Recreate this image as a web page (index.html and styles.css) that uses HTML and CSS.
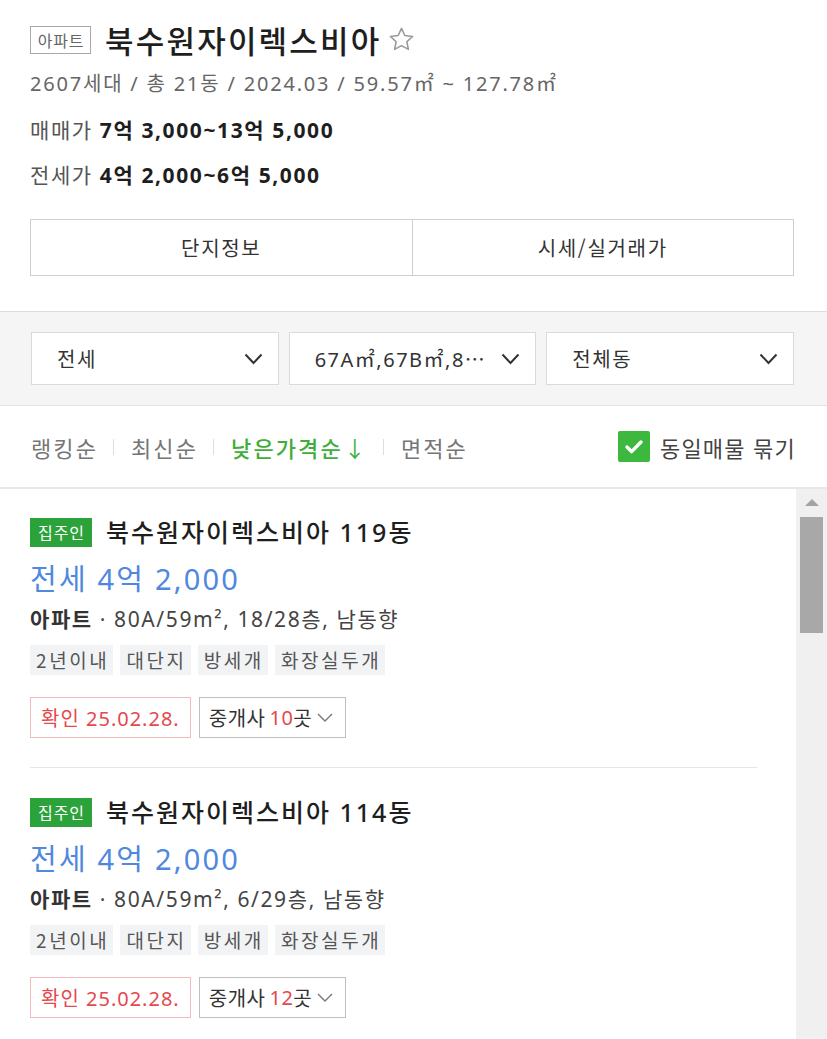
FILE: index.html
```html
<!DOCTYPE html>
<html lang="ko">
<head>
<meta charset="utf-8">
<title>북수원자이렉스비아</title>
<link rel="stylesheet" href="styles.css">
</head>
<body>
<div class="page">
  <header class="complex">
    <div class="title-row">
      <span class="type-badge">아파트</span>
      <h1 class="title">북수원자이렉스비아</h1>
      <svg class="star" viewBox="0 0 24 24" width="29" height="29" aria-hidden="true">
        <path d="M12 2.8l2.75 5.9 6.45.75-4.78 4.4 1.3 6.37L12 17.05l-5.72 3.17 1.3-6.37L2.8 9.45l6.45-.75z" fill="none" stroke="#9a9a9a" stroke-width="1.3" stroke-linejoin="round"/>
      </svg>
    </div>
    <p class="meta">2607세대 / 총 21동 / 2024.03 / 59.57㎡ ~ 127.78㎡</p>
    <p class="price-line first">매매가 <strong>7억 3,000~13억 5,000</strong></p>
    <p class="price-line">전세가 <strong>4억 2,000~6억 5,000</strong></p>
    <div class="tabs">
      <button class="tab">단지정보</button>
      <button class="tab">시세/실거래가</button>
    </div>
  </header>

  <section class="filters">
    <div class="select"><span class="select-text">전세</span><svg class="chev" viewBox="0 0 19 12" width="19" height="12"><path d="M1.5 1.5L9.5 10l8-8.5" fill="none" stroke="#333" stroke-width="2"/></svg></div>
    <div class="select"><span class="select-text">67A㎡,67B㎡,8⋯</span><svg class="chev" viewBox="0 0 19 12" width="19" height="12"><path d="M1.5 1.5L9.5 10l8-8.5" fill="none" stroke="#333" stroke-width="2"/></svg></div>
    <div class="select"><span class="select-text">전체동</span><svg class="chev" viewBox="0 0 19 12" width="19" height="12"><path d="M1.5 1.5L9.5 10l8-8.5" fill="none" stroke="#333" stroke-width="2"/></svg></div>
  </section>

  <nav class="sortbar">
    <ul class="sorts">
      <li class="sort">랭킹순</li>
      <li class="sep"></li>
      <li class="sort">최신순</li>
      <li class="sep"></li>
      <li class="sort active">낮은가격순<span class="arrow-down">↓</span></li>
      <li class="sep"></li>
      <li class="sort">면적순</li>
    </ul>
    <label class="group-check">
      <span class="checkbox"><svg viewBox="0 0 32 31" width="32" height="31"><rect x="0" y="0" width="32" height="31" rx="2" fill="#3cb83e"/><path d="M9 16l4.6 4.6 9.4-9.6" fill="none" stroke="#fff" stroke-width="3.4" stroke-linecap="round" stroke-linejoin="round"/></svg></span>
      <span class="check-text">동일매물 묶기</span>
    </label>
  </nav>

  <div class="list-wrap">
    <div class="list">
      <article class="item">
        <div class="item-title-row"><span class="owner-badge">집주인</span><h2 class="item-title">북수원자이렉스비아 119동</h2></div>
        <p class="item-price">전세 4억 2,000</p>
        <p class="item-info"><b>아파트</b> · 80A/59m², 18/28층, 남동향</p>
        <ul class="tags"><li class="tag">2년이내</li><li class="tag">대단지</li><li class="tag">방세개</li><li class="tag">화장실두개</li></ul>
        <div class="item-foot">
          <span class="confirm">확인 25.02.28.</span>
          <span class="agents">중개사 <em>10</em>곳<svg class="small-chev" viewBox="0 0 16 9" width="16" height="9"><path d="M1 1l7 7 7-7" fill="none" stroke="#777" stroke-width="1.4"/></svg></span>
        </div>
      </article>
      <article class="item">
        <div class="item-title-row"><span class="owner-badge">집주인</span><h2 class="item-title">북수원자이렉스비아 114동</h2></div>
        <p class="item-price">전세 4억 2,000</p>
        <p class="item-info"><b>아파트</b> · 80A/59m², 6/29층, 남동향</p>
        <ul class="tags"><li class="tag">2년이내</li><li class="tag">대단지</li><li class="tag">방세개</li><li class="tag">화장실두개</li></ul>
        <div class="item-foot">
          <span class="confirm">확인 25.02.28.</span>
          <span class="agents">중개사 <em>12</em>곳<svg class="small-chev" viewBox="0 0 16 9" width="16" height="9"><path d="M1 1l7 7 7-7" fill="none" stroke="#777" stroke-width="1.4"/></svg></span>
        </div>
      </article>
    </div>
    <div class="scrollbar">
      <span class="sb-arrow"></span>
      <span class="sb-thumb"></span>
    </div>
  </div>
</div>
</body>
</html>
```

FILE: styles.css
```css
* { box-sizing: border-box; }
html, body { margin: 0; padding: 0; }
body {
  width: 827px;
  height: 1039px;
  overflow: hidden;
  background: #fff;
  font-family: "Noto Sans", "Noto Sans CJK KR", sans-serif;
  color: #222;
}
p, h1, h2, ul { margin: 0; padding: 0; }
ul { list-style: none; }

/* header */
.complex { padding: 20px 33px 35px 30px; }
.title-row { display: flex; align-items: center; height: 40px; }
.type-badge {
  display: inline-flex; align-items: center; justify-content: center;
  width: 61px; height: 28px;
  padding-left: 1px;
  border: 1px solid #a8a8a8;
  color: #666; font-size: 16px; letter-spacing: 0.8px;
  font-family: "Noto Sans CJK KR", sans-serif;
}
.title {
  margin-left: 14px;
  font-family: "Noto Sans CJK KR", sans-serif;
  font-size: 31px; font-weight: 500; line-height: 40px;
  letter-spacing: 2.2px;
  color: #1e1e1e;
}
.star { margin-left: 6px; margin-top: -2px; }
.meta {
  margin-top: 10px; line-height: 28px;
  font-size: 20px; color: #666; letter-spacing: 1.8px;
}
.price-line { margin-top: 9px; line-height: 36px; font-size: 21px; color: #555; letter-spacing: 1.6px; }
.price-line.first { margin-top: 14px; }
.price-line strong { color: #1e1e1e; font-weight: 700; }

.tabs {
  margin-top: 26px;
  display: flex;
  height: 57px;
  border: 1px solid #cfcfcf;
}
.tab {
  flex: 1;
  background: #fff;
  border: 0;
  font-family: "Noto Sans CJK KR", sans-serif;
  font-size: 20px; color: #333; letter-spacing: 1.7px;
}
.tab + .tab { border-left: 1px solid #cfcfcf; }

/* filters */
.filters {
  display: flex; gap: 10px;
  padding: 20px 33px 20px 31px;
  background: #f5f5f5;
  border-top: 1px solid #dcdcdc;
  border-bottom: 1px solid #e2e2e2;
}
.select {
  flex: 1;
  height: 53px;
  display: flex; align-items: center; justify-content: space-between;
  padding: 0 15px 0 25px;
  background: #fff;
  border: 1px solid #dadada;
}
.select-text { font-size: 20px; color: #333; letter-spacing: 1.5px; }
.chev { flex: none; }

/* sort bar */
.sortbar {
  height: 83px;
  display: flex; align-items: center; justify-content: space-between;
  padding: 0 31px 0 31px;
  border-bottom: 2px solid #e8e8e8;
}
.sorts { display: flex; align-items: center; }
.sort { font-size: 22px; color: #767676; font-family: "Noto Sans CJK KR", sans-serif; letter-spacing: 2.1px; line-height: 30px; }
.sort.active { color: #3fae3a; font-weight: 500; }
.arrow-down { margin-left: 1px; font-weight: 400; }
.sep { width: 1px; height: 16px; background: #dedede; margin: 0 17px 0 15px; }
.group-check { display: flex; align-items: center; }
.checkbox { display: flex; width: 32px; height: 31px; }
.check-text { margin-left: 10px; font-size: 22px; color: #444; font-family: "Noto Sans CJK KR", sans-serif; letter-spacing: 1.2px; }

/* list */
.list-wrap { display: flex; height: 560px; }
.list { flex: 1; padding: 0 39px 0 30px; }
.item { padding: 29px 0 29px; border-bottom: 1px solid #e6e6e6; }
.item + .item { padding-top: 30px; }
.item-title-row { display: flex; align-items: center; height: 28px; }
.owner-badge {
  display: inline-flex; align-items: center; justify-content: center;
  width: 62px; height: 29px;
  padding-left: 1px;
  background: #2ba33a; color: #fff;
  font-family: "Noto Sans CJK KR", sans-serif;
  font-size: 16px; letter-spacing: 1px;
}
.item-title {
  margin-left: 14px;
  font-size: 25px; font-weight: 500; line-height: 30px; color: #1e1e1e;
  letter-spacing: 2px;
}
.item-price {
  margin-top: 10px; line-height: 46px;
  font-size: 29px; color: #5088e0; letter-spacing: 2.2px;
}
.item-info { line-height: 34px; font-size: 21px; color: #444; letter-spacing: 1.6px; }
.item-info b { font-weight: 700; color: #333; }
.tags { display: flex; gap: 7px; margin-top: 9px; }
.tag {
  height: 30px; line-height: 30px; padding: 0 4px 0 6px;
  background: #f2f3f5; color: #555;
  font-size: 19px; letter-spacing: 2.6px;
  font-family: "Noto Sans CJK KR", sans-serif;
}
.item-foot { display: flex; gap: 8px; margin-top: 22px; }
.confirm, .agents {
  height: 41px; display: inline-flex; align-items: center;
  font-size: 20px; letter-spacing: 1px;
}
.confirm { padding: 0 10px 0 10px; border: 1px solid #f5b8bb; color: #e5484d; }
.agents { padding: 0 12px 0 9px; border: 1px solid #bfbfbf; color: #333; letter-spacing: 0.5px; }
.agents em { font-style: normal; color: #e5484d; margin-left: 4px; }
.small-chev { margin-left: 5px; }

/* scrollbar */
.scrollbar {
  width: 31px; flex: none;
  background: #f0f0f0;
  display: flex; flex-direction: column; align-items: center;
  padding-top: 10px;
}
.sb-arrow {
  width: 0; height: 0;
  border-left: 7px solid transparent; border-right: 7px solid transparent;
  border-bottom: 7px solid #a3a3a3;
}
.sb-thumb { margin-top: 11px; width: 23px; height: 116px; background: #a8a8a8; }
```
